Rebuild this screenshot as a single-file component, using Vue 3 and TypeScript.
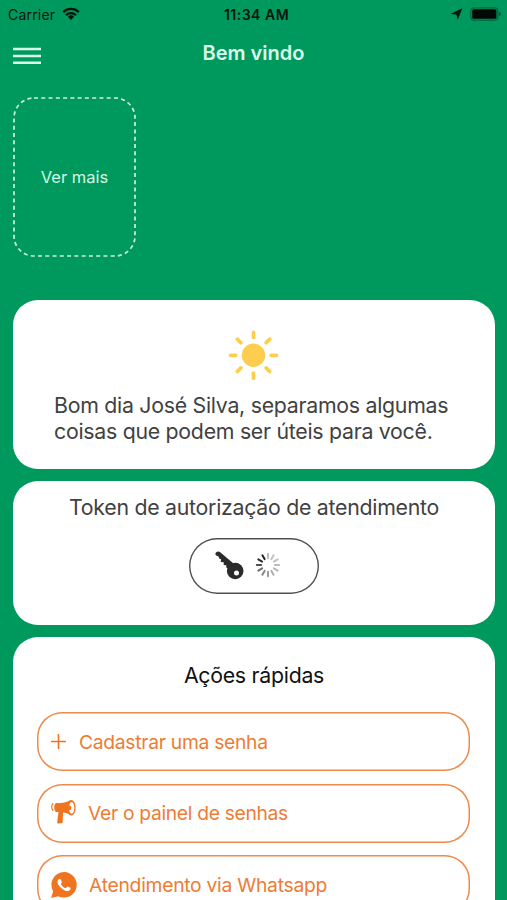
<script setup lang="ts">
interface QuickAction {
  id: 'plus' | 'horn' | 'whatsapp'
  label: string
}

const actions: QuickAction[] = [
  { id: 'plus', label: 'Cadastrar uma senha' },
  { id: 'horn', label: 'Ver o painel de senhas' },
  { id: 'whatsapp', label: 'Atendimento via Whatsapp' },
]

const sunRays: number[] = [0, 45, 90, 135, 180, 225, 270, 315]

// Each spoke is darker than the one before it, going clockwise
const spokes = [0.3, 0.28, 0.28, 0.3, 0.33, 0.37, 0.45, 0.55, 0.66, 0.8, 0.95, 1].map(
  (opacity, i) => ({ angle: i * 30, opacity }),
)
</script>

<template>
  <div class="screen">
    <div class="status">
      <div class="status-left">
        <span class="carrier">Carrier</span>
        <svg class="wifi" width="18" height="14" viewBox="0 0 18 14">
          <g fill="none" stroke="#03150d" stroke-width="2.3">
            <path d="M1.2 5.1a11.2 11.2 0 0 1 15.6 0" />
            <path d="M4 8.1a7.2 7.2 0 0 1 10 0" />
          </g>
          <path d="M5.9 9.7a4.5 4.5 0 0 1 6.2 0L9 12.9z" fill="#03150d" />
        </svg>
      </div>
      <span class="clock">11:34 AM</span>
      <div class="status-right">
        <svg width="13" height="12" viewBox="0 0 13 12">
          <path d="M12.4.2 7.8 11.8 6.4 6.5.3 6.1z" fill="#03150d" />
        </svg>
        <svg width="32" height="14" viewBox="0 0 32 14">
          <rect x=".8" y=".8" width="27" height="12.4" rx="3.2" fill="none" stroke="#04613d" stroke-width="1.2" />
          <rect x="2.2" y="2.2" width="24.2" height="9.6" rx="1.6" fill="#020806" />
          <path d="M29.3 4.8c1.8.6 1.8 3.8 0 4.4z" fill="#04432b" />
        </svg>
      </div>
    </div>

    <header class="nav">
      <button class="menu" aria-label="Menu">
        <svg width="28" height="18" viewBox="0 0 28 18">
          <path d="M0 2h28M0 9h28M0 15.700h28" fill="none" stroke="#d6f9e8" stroke-width="2.400" />
        </svg>
      </button>
      <h1>Bem vindo</h1>
    </header>

    <section class="banner">
      <button class="more">
        <svg class="dashes" width="123" height="160" viewBox="0 0 123 160">
          <rect x="1" y="1" width="121" height="158" rx="20" fill="none" stroke="#c9f3dc" stroke-width="1.7" stroke-dasharray="4 3.27" />
        </svg>
        <span>Ver mais</span>
      </button>
    </section>

    <main class="cards">
      <section class="card greeting">
        <svg class="sun" width="52" height="52" viewBox="-25.5 -25.3 52 52">
          <circle r="11.7" fill="#fdcd50" />
          <path
            v-for="angle in sunRays"
            :key="angle"
            d="M0-17.8V-22.9"
            :transform="`rotate(${angle})`"
            stroke="#fdcd50"
            stroke-width="3.7"
            stroke-linecap="round"
          />
        </svg>
        <p>Bom dia José Silva, separamos algumas<br />coisas que podem ser úteis para você.</p>
      </section>

      <section class="card token">
        <h2>Token de autorização de atendimento</h2>
        <button class="token-button" aria-label="Token">
          <svg width="29" height="29" viewBox="0 0 29 29">
            <g fill="#2b2b2b">
              <path d="M1 1.500C2.200.3 4 .3 5.200 1.300L18.500 12.500 13 17.500 11.200 16.400 11.400 14.200 8.700 14 8.700 11.300 5.800 11 6 8.300 4.200 7.600 3.600 5.600 1.200 4.600C.2 3.700.1 2.400 1 1.500z" />
              <circle cx="20.200" cy="20" r="8.300" />
            </g>
            <circle cx="21.500" cy="22" r="2.500" fill="#fff" />
          </svg>
          <svg width="26" height="26" viewBox="-13 -13 26 26">
            <path
              v-for="spoke in spokes"
              :key="spoke.angle"
              d="M0-6.8V-11.2"
              :transform="`rotate(${spoke.angle})`"
              :stroke-opacity="spoke.opacity"
              stroke="#222"
              stroke-width="2"
              stroke-linecap="round"
            />
          </svg>
        </button>
      </section>

      <section class="card quick">
        <h2>Ações rápidas</h2>
        <button v-for="action in actions" :key="action.id" class="action" :class="action.id">
          <svg v-if="action.id === 'plus'" width="15" height="15" viewBox="0 0 15 15">
            <path d="M7.5.7v13.600M.7 7.500h13.600" fill="none" stroke="#f0741f" stroke-width="1.600" stroke-linecap="round" />
          </svg>
          <svg v-else-if="action.id === 'horn'" width="25" height="26" viewBox="0 0 25 26">
            <path d="M1.900 3.700C.4 5.500.4 8.500 1.900 10.300" fill="none" stroke="#f0741f" stroke-width="1.300" stroke-linecap="round" />
            <g fill="#f0741f">
              <path d="M5 3.100C10 3.400 15 2.600 19.800.2l.6 15.200c-2.600-1.600-5.300-2.600-8.300-2.900L11.600 22c0 .8-.4 1.200-1.100 1.300l-3.100.3c-.9 0-1.300-.5-1.200-1.400l1.300-10.300-2.500.1C2.700 10.600 2.700 4.600 5 3.100z" />
              <ellipse cx="20.200" cy="7.800" rx="4.400" ry="7.700" />
            </g>
            <ellipse cx="20.600" cy="7.800" rx="2.700" ry="5.900" fill="#fff" />
            <path d="M18 5.300a2.400 2.500 0 0 1 0 5z" fill="#f0741f" />
          </svg>
          <svg v-else width="26" height="26" viewBox="0 0 24 24">
            <path fill="#f0741f" d="M12.1.1A11.750 11.750 0 0 0 1.900 17.700L.2 23.900l6.400-1.600A11.750 11.750 0 1 0 12.100.1z" />
            <path
              fill="#fff"
              d="M17.472 14.382c-.297-.149-1.758-.867-2.030-.967-.273-.099-.471-.148-.670.150-.197.297-.767.966-.940 1.164-.173.199-.347.223-.644.075-.297-.150-1.255-.463-2.390-1.475-.883-.788-1.480-1.761-1.653-2.059-.173-.297-.018-.458.130-.606.134-.133.298-.347.446-.520.149-.174.198-.298.298-.497.099-.198.050-.371-.025-.520-.075-.149-.669-1.612-.916-2.207-.242-.579-.487-.500-.669-.510-.173-.008-.371-.010-.570-.010-.198 0-.520.074-.792.372-.272.297-1.040 1.016-1.040 2.479 0 1.462 1.065 2.875 1.213 3.074.149.198 2.096 3.200 5.077 4.487.709.306 1.262.489 1.694.625.712.227 1.360.195 1.871.118.571-.085 1.758-.719 2.006-1.413.248-.694.248-1.289.173-1.413-.074-.124-.272-.198-.570-.347z"
            />
          </svg>
          <span>{{ action.label }}</span>
        </button>
      </section>
    </main>
  </div>
</template>

<style>
body {
  background: #00995d;
}
</style>

<style scoped>
.screen {
  box-sizing: border-box;
  height: 900px;
  overflow: hidden;
  background: #00995d;
  color: #414141;
  font-family: Inter, 'Liberation Sans', sans-serif;
}

button {
  box-sizing: border-box;
  padding: 0;
  border: 0;
  background: none;
  color: inherit;
  font: inherit;
  letter-spacing: inherit;
}

svg {
  display: block;
  flex: none;
}

h1,
h2,
p {
  margin: 0;
  font-weight: 400;
  white-space: nowrap;
}

.status {
  display: grid;
  grid-template-columns: 1fr auto 1fr;
  align-items: center;
  height: 28px;
  padding: 0 5px 0 8px;
  color: #03150d;
  font-size: 14px;
}

.status-left,
.status-right {
  display: flex;
  align-items: center;
}

.status-left {
  gap: 7px;
}

.carrier {
  letter-spacing: 0.2px;
}

.status-right {
  justify-content: flex-end;
  gap: 7px;
}

.clock {
  padding-left: 3px;
  font-weight: 600;
  letter-spacing: 0.5px;
}

.nav {
  display: grid;
  grid-template-columns: 28px 1fr 28px;
  align-items: center;
  height: 49px;
  padding: 0 13px;
  color: #dcfbea;
}

.nav h1 {
  font-size: 20px;
  font-weight: 600;
  text-align: center;
}

.menu {
  padding-top: 7px;
}

.banner {
  padding: 20px 13px 43px;
}

.more {
  display: grid;
  place-items: center;
  width: 123px;
  height: 160px;
  color: #d3f8e5;
  font-size: 16.5px;
}

.more > * {
  grid-area: 1 / 1;
}

.cards {
  display: grid;
  gap: 12px;
  padding: 0 12px 0 13px;
}

.card {
  box-sizing: border-box;
  display: flex;
  flex-direction: column;
  align-items: center;
  border-radius: 25px;
  background: #fff;
}

.greeting p,
.card h2 {
  font-size: 21.3px;
  line-height: 26px;
  letter-spacing: -0.27px;
}

.greeting {
  height: 169px;
  padding-top: 30px;
}

.greeting p {
  align-self: flex-start;
  margin: 10px 0 0 41px;
}

.token {
  height: 144px;
  padding-top: 13px;
}

.token-button {
  display: flex;
  align-items: center;
  gap: 11px;
  width: 130px;
  height: 56px;
  margin-top: 18px;
  padding: 0 0 2px 26px;
  border-radius: 28px;
  box-shadow: inset 0 0 0 1.4px #505050;
}

.quick {
  align-items: flex-start;
  gap: 12.5px;
  height: 320px;
  padding: 25px 24px 0;
}

.quick h2 {
  align-self: center;
  margin-bottom: 11.6px;
  color: #111;
}

.action {
  display: flex;
  align-items: center;
  flex: none;
  width: 433px;
  height: 59px;
  padding-left: 14px;
  border-radius: 25px;
  box-shadow: inset 0 0 0 1.5px #ee8a4b;
  color: #ee7c34;
  font-size: 19.3px;
  letter-spacing: -0.33px;
  gap: 12px;
  white-space: nowrap;
}

.plus {
  gap: 13px;
  letter-spacing: -0.3px;
}

.whatsapp {
  letter-spacing: -0.27px;
}
</style>
